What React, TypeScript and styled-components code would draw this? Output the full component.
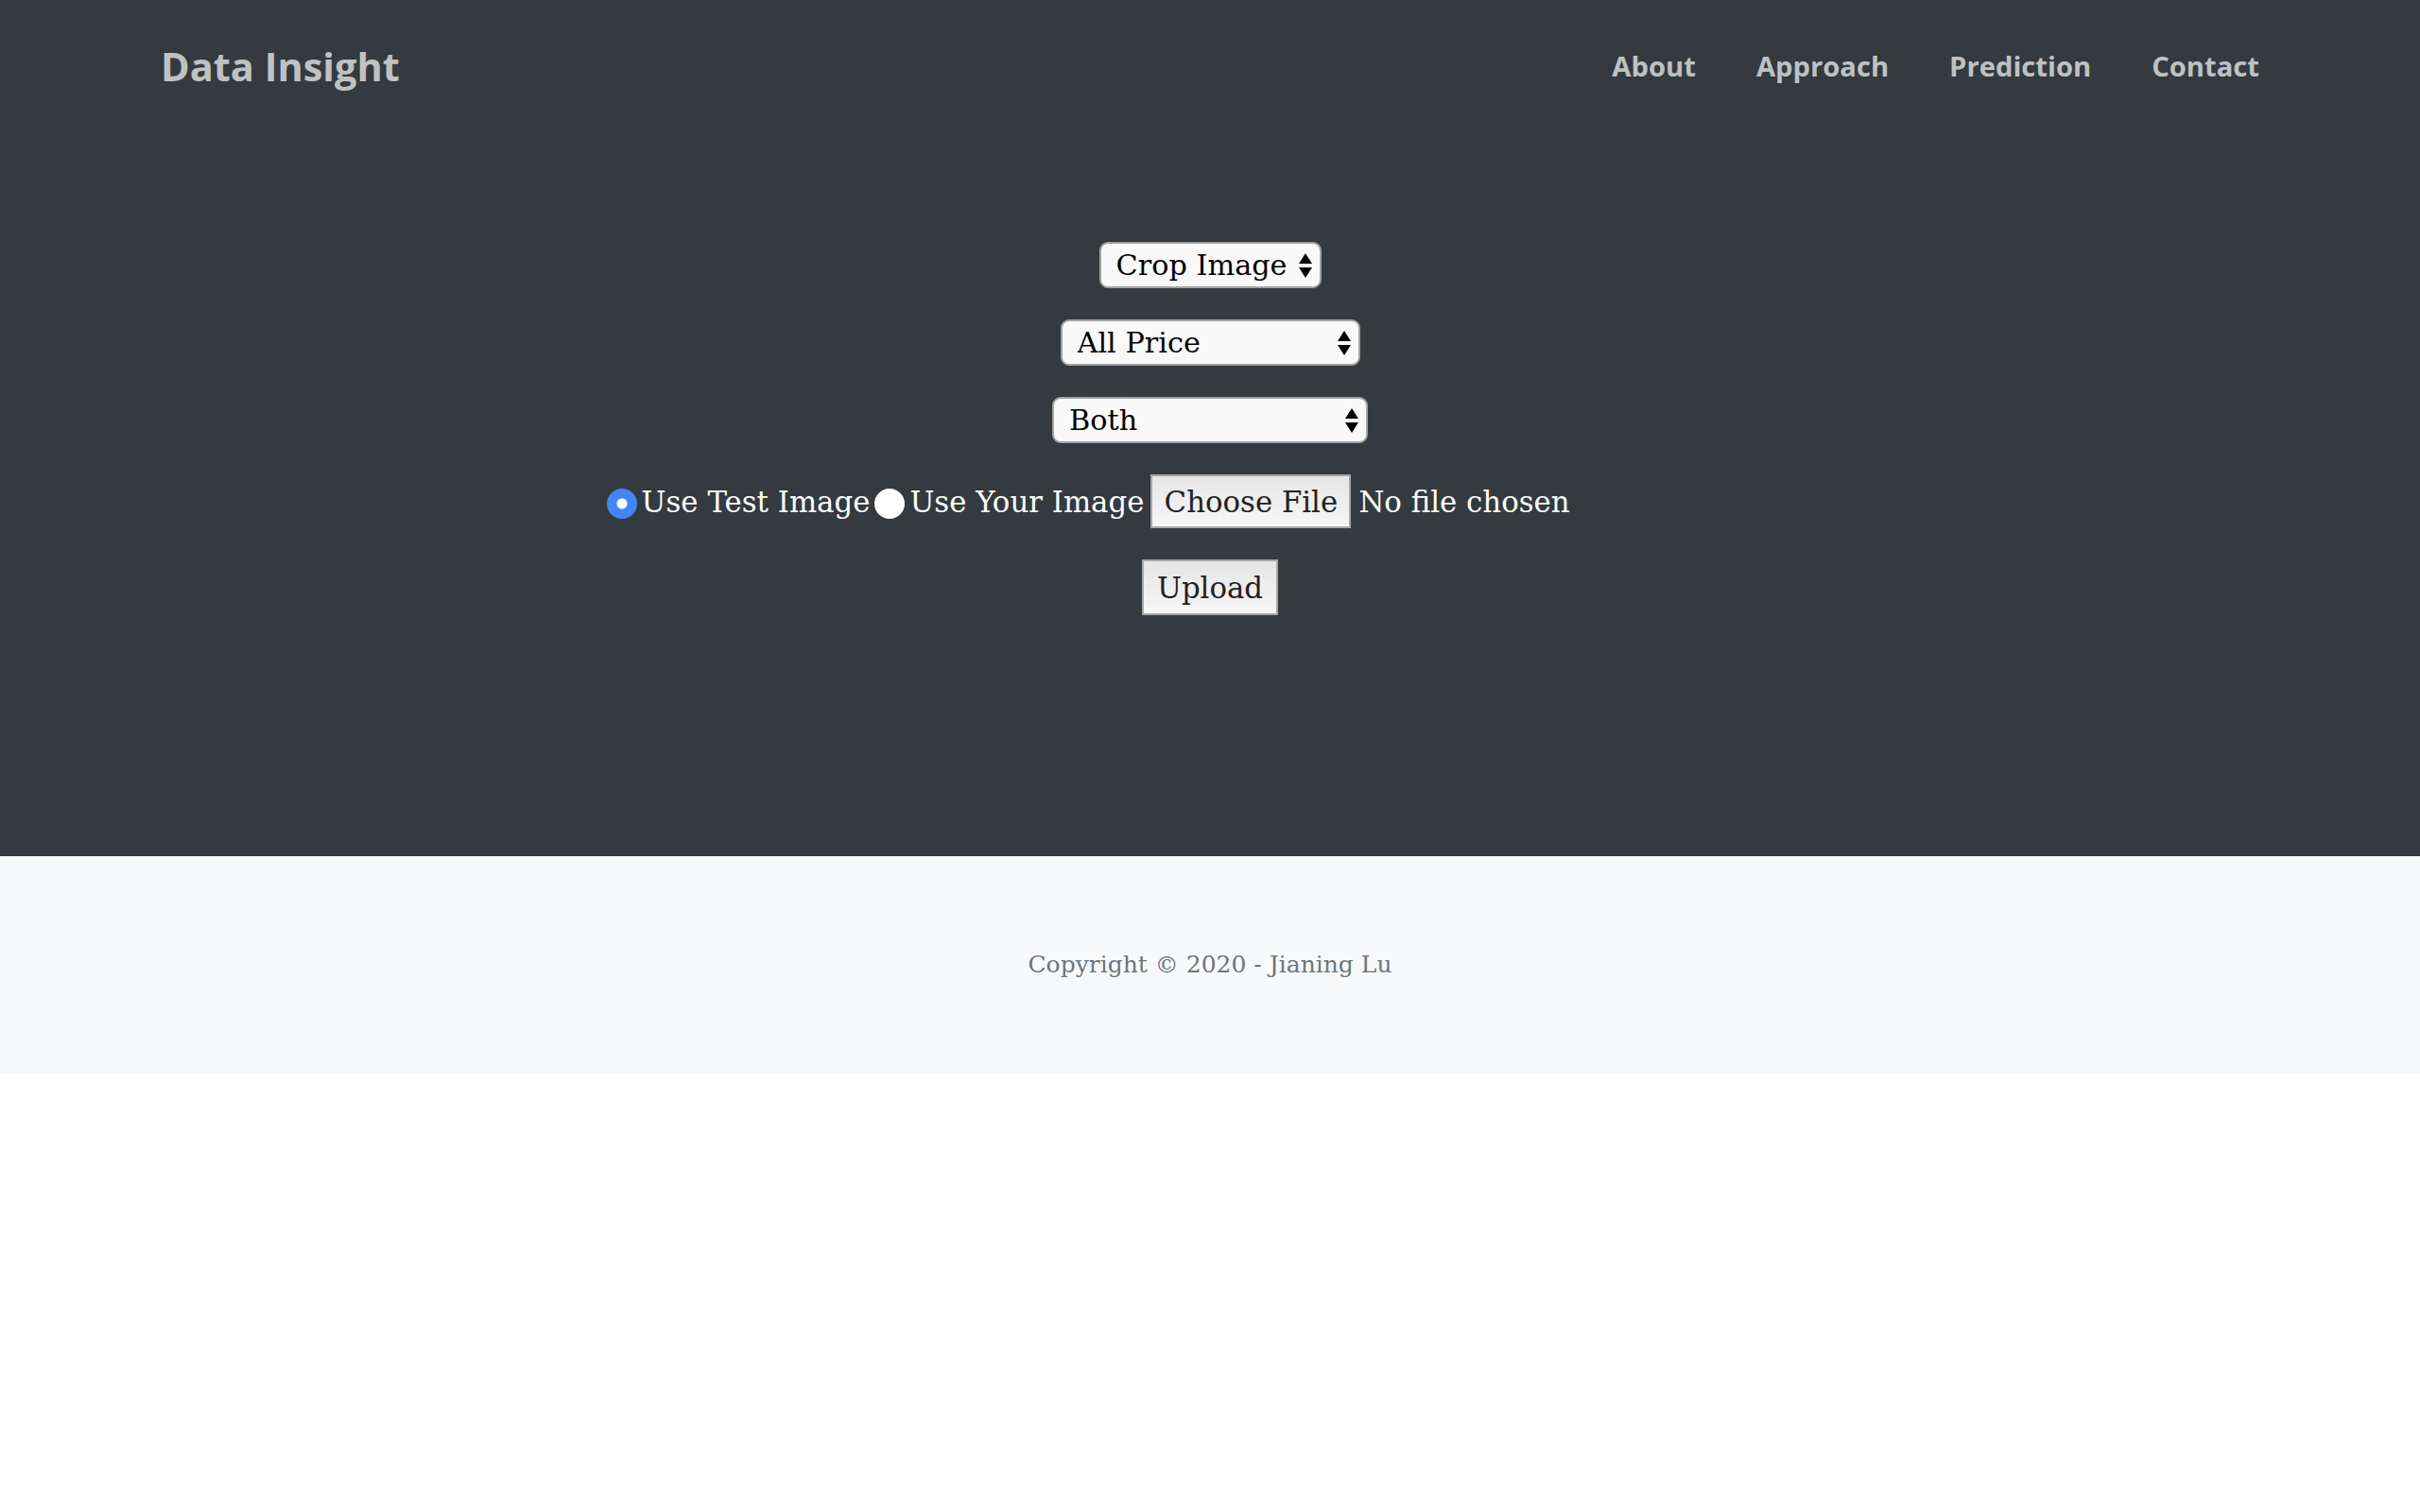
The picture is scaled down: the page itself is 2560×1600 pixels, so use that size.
import React from "react";
import styled, { createGlobalStyle } from "styled-components";

const Global = createGlobalStyle`
  html, body { margin: 0; padding: 0; background: #ffffff; }
  body { font-family: "DejaVu Serif", "Liberation Serif", serif; }
  * { box-sizing: border-box; }
`;

const Masthead = styled.header`
  background: #343a40;
  height: 906px;
  display: flex;
  flex-direction: column;
`;

const Nav = styled.nav`
  height: 140px;
  padding: 0 170px;
  display: flex;
  align-items: center;
  justify-content: space-between;
`;

const Brand = styled.a`
  font-family: "Open Sans", "DejaVu Sans", sans-serif;
  font-weight: 700;
  font-size: 41.5px;
  color: rgba(255, 255, 255, 0.7);
  text-decoration: none;
`;

const Links = styled.ul`
  display: flex;
  list-style: none;
  margin: 0;
  padding: 0;
  gap: 64px;
`;

const NavLink = styled.a`
  font-family: "Open Sans", "DejaVu Sans", sans-serif;
  font-weight: 700;
  font-size: 29.2px;
  color: rgba(255, 255, 255, 0.7);
  text-decoration: none;
`;

const Form = styled.form`
  margin-top: 116px;
  display: flex;
  flex-direction: column;
  align-items: center;
  gap: 33px;
`;

const SelectWrap = styled.div<{ $w: number }>`
  position: relative;
  width: ${(p) => p.$w}px;
  height: 49px;
`;

const Select = styled.select`
  appearance: none;
  -webkit-appearance: none;
  width: 100%;
  height: 100%;
  border: 2px solid #a3a3a3;
  border-radius: 9px;
  background: #f9f9f9;
  font-family: "DejaVu Serif", "Liberation Serif", serif;
  font-size: 30.3px;
  color: #000;
  padding: 0 0 0 16px;
  outline: none;
`;

const Arrows = styled.svg`
  position: absolute;
  right: 10px;
  top: 50%;
  transform: translateY(-50%);
  pointer-events: none;
`;

const Row = styled.div`
  display: flex;
  align-items: center;
  font-size: 30.8px;
  color: #ffffff;
`;

const Radio = styled.input`
  appearance: none;
  -webkit-appearance: none;
  width: 32px;
  height: 32px;
  border-radius: 50%;
  margin: 4px 5px 0 5px;
  background: #ffffff;
  &:checked {
    background: radial-gradient(circle, #ffffff 0 5px, #4285f4 6px);
  }
  &:first-child {
    margin-left: 0;
  }
`;

const Label = styled.label`
  white-space: nowrap;
`;

const FileBlock = styled.div`
  width: 701px;
  margin-left: 7px;
  display: flex;
  align-items: center;
  gap: 8px;
`;

const GrayButton = styled.button<{ $w: number; $h: number }>`
  width: ${(p) => p.$w}px;
  height: ${(p) => p.$h}px;
  border: 2px solid #a8a8a8;
  border-radius: 0;
  background: linear-gradient(#e6e6e6, #f6f6f6);
  color: #222222;
  font-family: "DejaVu Serif", "Liberation Serif", serif;
  font-size: 30.8px;
  padding: 0;
  display: flex;
  align-items: center;
  justify-content: center;
`;

const FileName = styled.span`
  white-space: nowrap;
`;

const Footer = styled.footer`
  background: #f8f9fa;
  height: 230px;
  display: flex;
  align-items: center;
  justify-content: center;
`;

const Copy = styled.div`
  font-family: "DejaVu Serif", "Liberation Serif", serif;
  font-size: 25px;
  color: #6c757d;
  margin-top: -2px;
`;

const ArrowIcon = () => (
  <Arrows width="14" height="26" viewBox="0 0 14 26">
    <polygon points="0,11 7,0 14,11" fill="#000" />
    <polygon points="0,15 14,15 7,26" fill="#000" />
  </Arrows>
);

const Dropdown = ({ w, options }: { w: number; options: string[] }) => (
  <SelectWrap $w={w}>
    <Select defaultValue={options[0]}>
      {options.map((o) => (
        <option key={o} value={o}>
          {o}
        </option>
      ))}
    </Select>
    <ArrowIcon />
  </SelectWrap>
);

export default function App() {
  return (
    <>
      <Global />
      <Masthead>
        <Nav>
          <Brand href="#">Data Insight</Brand>
          <Links>
            <li><NavLink href="#">About</NavLink></li>
            <li><NavLink href="#">Approach</NavLink></li>
            <li><NavLink href="#">Prediction</NavLink></li>
            <li><NavLink href="#">Contact</NavLink></li>
          </Links>
        </Nav>
        <Form onSubmit={(e) => e.preventDefault()}>
          <Dropdown w={235} options={["Crop Image", "Full Image"]} />
          <Dropdown w={317} options={["All Price", "Low Price", "High Price"]} />
          <Dropdown w={334} options={["Both", "Mask", "Original"]} />
          <Row>
            <Radio type="radio" name="src" id="test" defaultChecked />
            <Label htmlFor="test">Use Test Image</Label>
            <Radio type="radio" name="src" id="own" />
            <Label htmlFor="own">Use Your Image</Label>
            <FileBlock>
              <GrayButton type="button" $w={212} $h={57}>Choose File</GrayButton>
              <FileName>No file chosen</FileName>
            </FileBlock>
          </Row>
          <GrayButton type="submit" $w={144} $h={59}>Upload</GrayButton>
        </Form>
      </Masthead>
      <Footer>
        <Copy>Copyright © 2020 - Jianing Lu</Copy>
      </Footer>
    </>
  );
}
